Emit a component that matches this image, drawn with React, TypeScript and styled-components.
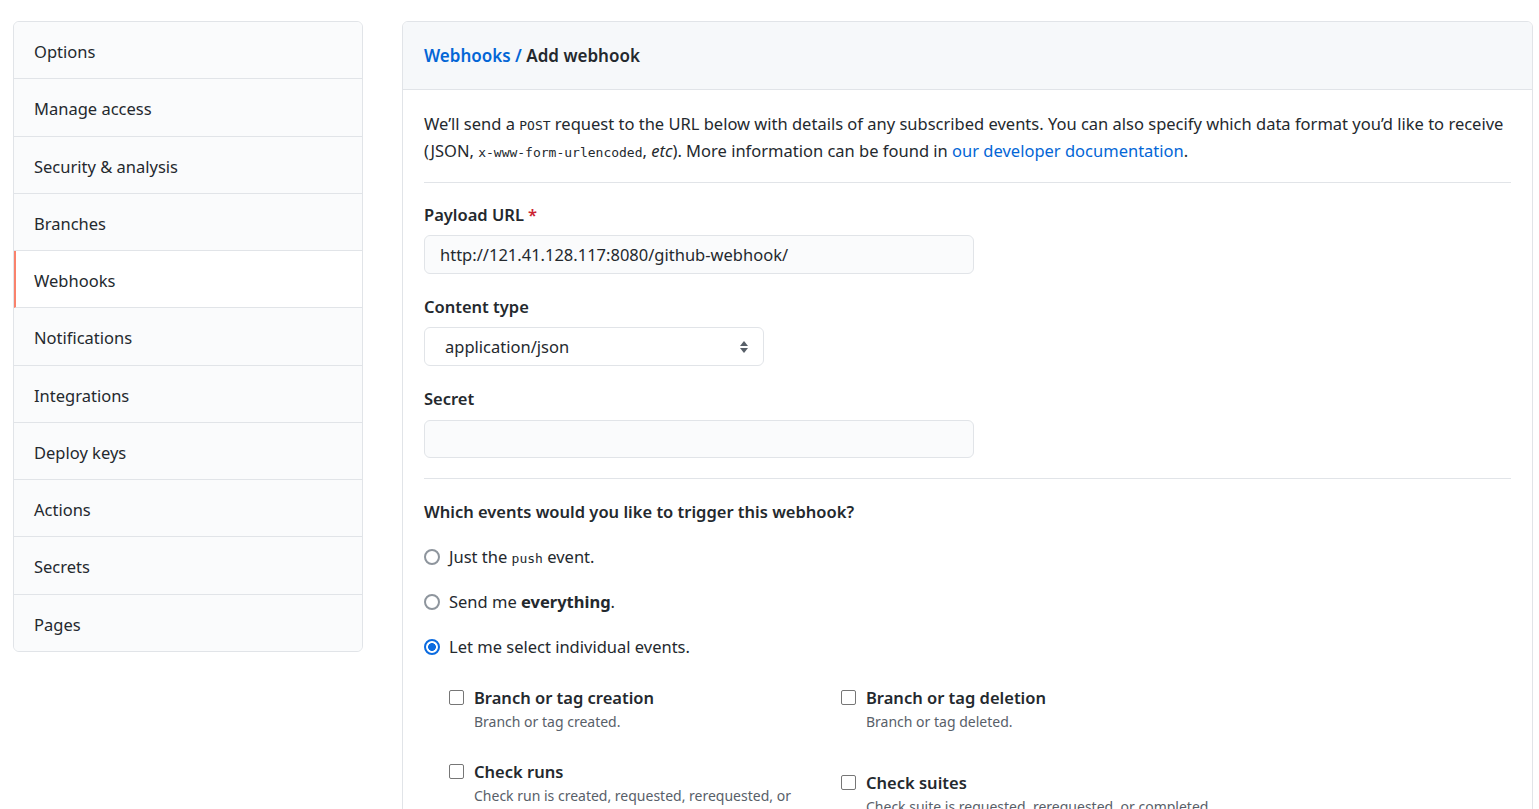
import React from "react";
import styled, { createGlobalStyle } from "styled-components";

const GlobalStyle = createGlobalStyle`
  html, body { margin: 0; padding: 0; background: #fff; }
  body {
    font-family: "Noto Sans", "Open Sans", sans-serif;
    font-size: 16.5px;
    color: #24292e;
  }
  * { box-sizing: border-box; }
`;

const Page = styled.div`
  display: flex;
  align-items: flex-start;
  gap: 39px;
  padding: 21px 6px 0 13px;
  height: 809px;
  overflow: hidden;
`;

const SideMenu = styled.nav`
  flex: 0 0 350px;
  border: 1px solid #e1e4e8;
  border-radius: 6px;
  background: #fafbfc;
  overflow: hidden;
`;

const MenuItem = styled.a<{ $active?: boolean }>`
  display: flex;
  align-items: center;
  height: 57.25px;
  padding: 3px 20px 0 ${(p) => (p.$active ? "18px" : "20px")};
  border-bottom: 1px solid #e1e4e8;
  border-left: ${(p) => (p.$active ? "2px solid #f9826c" : "0")};
  background: ${(p) => (p.$active ? "#fff" : "#fafbfc")};
  color: #24292e;
  text-decoration: none;
  font-size: 16.5px;
  &:last-child { border-bottom: 0; height: 56.25px; }
`;

const Panel = styled.section`
  flex: 1 1 auto;
  border: 1px solid #e1e4e8;
  border-radius: 6px;
  min-height: 900px;
  overflow: hidden;
`;

const PanelHeader = styled.header`
  display: flex;
  align-items: center;
  height: 68px;
  padding: 0 21px 1px;
  background: #f6f8fa;
  border-bottom: 1px solid #e1e4e8;
  font-size: 17px;
  font-weight: 600;
`;

const Crumb = styled.a`
  color: #0366d6;
  text-decoration: none;
`;

const PanelBody = styled.div`
  padding: 20px 21px 0;
`;

const Intro = styled.p`
  margin: 0;
  line-height: 27px;
`;

const Code = styled.code`
  font-family: "DejaVu Sans Mono", "Liberation Mono", monospace;
  font-size: 13px;
  line-height: 1;
`;

const Link = styled.a`
  color: #0366d6;
  text-decoration: none;
`;

const Divider = styled.hr<{ $top: number }>`
  border: 0;
  border-top: 1px solid #e1e4e8;
  margin: ${(p) => p.$top}px 0 0;
`;

const Field = styled.div<{ $top?: number }>`
  display: flex;
  flex-direction: column;
  gap: 8px;
  margin-top: ${(p) => p.$top ?? 21}px;
`;

const Label = styled.label`
  font-weight: 600;
  line-height: 24px;
`;

const Required = styled.span`
  color: #cb2431;
  margin-left: 4px;
`;

const TextInput = styled.input<{ $h?: number; $mt?: number }>`
  width: 550px;
  height: ${(p) => p.$h ?? 39}px;
  margin-top: ${(p) => p.$mt ?? 0}px;
  padding: 0 15px;
  border: 1px solid #e1e4e8;
  border-radius: 6px;
  background: #fafbfc;
  font: inherit;
  color: #24292e;
  outline: none;
`;

const SelectBox = styled.div`
  display: flex;
  align-items: center;
  justify-content: space-between;
  width: 340px;
  height: 39px;
  padding: 0 13px 0 20px;
  border: 1px solid #e1e4e8;
  border-radius: 6px;
  background: #fff;
`;

const Question = styled.div`
  margin-top: 19px;
  font-weight: 600;
  line-height: 27px;
`;

const RadioRow = styled.label`
  display: flex;
  align-items: center;
  gap: 9px;
  margin-top: 18px;
  height: 27px;
  line-height: 27px;
`;

const Radio = styled.input.attrs({ type: "radio" })`
  appearance: none;
  margin: 0;
  width: 16px;
  height: 16px;
  border: 2px solid #8e959d;
  border-radius: 50%;
  background: #fff;
  &:checked {
    border-color: #0b6be0;
    background: radial-gradient(circle, #0b6be0 0 3.6px, #fff 4.2px);
  }
`;

const EventGrid = styled.div`
  display: flex;
  flex-wrap: wrap;
  padding-left: 25px;
  margin-top: 24px;
`;

const EventItem = styled.div<{ $offset?: number }>`
  width: 392px;
  display: grid;
  grid-template-columns: 15px 1fr;
  column-gap: 10px;
  align-content: start;
  padding-right: 20px;
  margin-bottom: 26px;
  margin-top: ${(p) => p.$offset ?? 0}px;
`;

const Checkbox = styled.input.attrs({ type: "checkbox" })`
  appearance: none;
  margin: 6px 0 0;
  width: 15px;
  height: 15px;
  border: 1.5px solid #767676;
  border-radius: 2px;
  background: #fff;
`;

const EventTitle = styled.span`
  font-weight: 600;
  line-height: 27px;
`;

const EventDesc = styled.span`
  grid-column: 2;
  color: #586069;
  font-size: 14px;
  line-height: 21px;
`;

const menu = [
  "Options",
  "Manage access",
  "Security & analysis",
  "Branches",
  "Webhooks",
  "Notifications",
  "Integrations",
  "Deploy keys",
  "Actions",
  "Secrets",
  "Pages",
];

const events = [
  { title: "Branch or tag creation", desc: "Branch or tag created." },
  { title: "Branch or tag deletion", desc: "Branch or tag deleted." },
  {
    title: "Check runs",
    desc: "Check run is created, requested, rerequested, or completed.",
  },
  {
    title: "Check suites",
    desc: "Check suite is requested, rerequested, or completed.",
    offset: 11,
  },
];

const SelectArrows = () => (
  <svg width="12" height="14" viewBox="0 0 12 14">
    <path d="M6 1 L10 6 L2 6 Z" fill="#586069" />
    <path d="M6 13 L10 8 L2 8 Z" fill="#586069" />
  </svg>
);

export default function App() {
  return (
    <>
      <GlobalStyle />
      <Page>
        <SideMenu>
          {menu.map((m) => (
            <MenuItem key={m} $active={m === "Webhooks"}>
              {m}
            </MenuItem>
          ))}
        </SideMenu>
        <Panel>
          <PanelHeader>
            <Crumb>Webhooks</Crumb>
            &nbsp;<Crumb as="span">/</Crumb>&nbsp;Add webhook
          </PanelHeader>
          <PanelBody>
            <Intro>
              We’ll send a <Code>POST</Code> request to the URL below with
              details of any subscribed events. You can also specify which data
              format you’d like to receive (JSON,{" "}
              <Code>x-www-form-urlencoded</Code>, <em>etc</em>). More
              information can be found in{" "}
              <Link>our developer documentation</Link>.
            </Intro>
            <Divider $top={18} />
            <Field $top={20}>
              <Label>
                Payload URL<Required>*</Required>
              </Label>
              <TextInput
                defaultValue="http://121.41.128.117:8080/github-webhook/"
                readOnly
              />
            </Field>
            <Field>
              <Label>Content type</Label>
              <SelectBox>
                <span>application/json</span>
                <SelectArrows />
              </SelectBox>
            </Field>
            <Field>
              <Label>Secret</Label>
              <TextInput readOnly $h={38} $mt={1} />
            </Field>
            <Divider $top={20} />
            <Question>Which events would you like to trigger this webhook?</Question>
            <RadioRow>
              <Radio name="ev" />
              <span>
                Just the <Code>push</Code> event.
              </span>
            </RadioRow>
            <RadioRow>
              <Radio name="ev" />
              <span>
                Send me <strong>everything</strong>.
              </span>
            </RadioRow>
            <RadioRow>
              <Radio name="ev" defaultChecked />
              <span>Let me select individual events.</span>
            </RadioRow>
            <EventGrid>
              {events.map((e) => (
                <EventItem key={e.title} $offset={e.offset}>
                  <Checkbox />
                  <EventTitle>{e.title}</EventTitle>
                  <EventDesc>{e.desc}</EventDesc>
                </EventItem>
              ))}
            </EventGrid>
          </PanelBody>
        </Panel>
      </Page>
    </>
  );
}
